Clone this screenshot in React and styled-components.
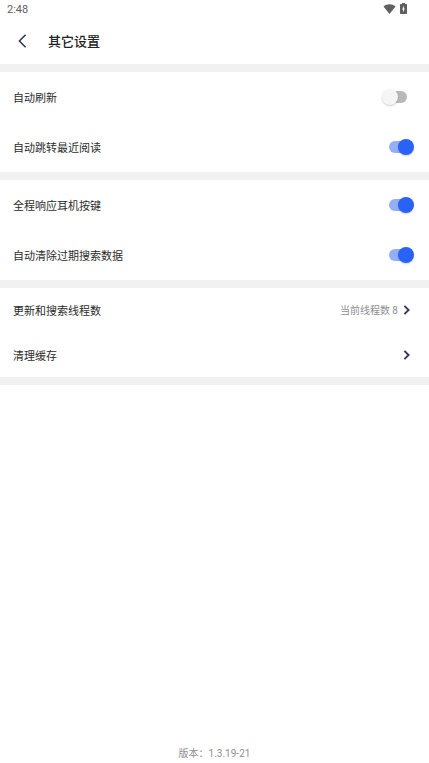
import { useState } from "react";
import styled, { createGlobalStyle } from "styled-components";

const GlobalStyle = createGlobalStyle`
    * {
        box-sizing: border-box;
    }
    body {
        margin: 0;
        background: #ffffff;
        color: #2c2c2c;
        font-family: Roboto, "Noto Sans CJK SC", sans-serif;
    }
`

const Page = styled.div`
    display: flex;
    flex-direction: column;
    min-height: 100vh;
`
const StatusBar = styled.div`
    display: flex;
    align-items: flex-start;
    justify-content: space-between;
    height: 18px;
    padding: 0 22px 0 7px;
    font-size: 11px;
    line-height: 20px;
    color: #606060;
`
const StatusIcons = styled.div`
    display: flex;
    align-items: center;
    gap: 4px;
    padding-top: 3px;
`
const Header = styled.header`
    display: flex;
    align-items: center;
    gap: 18px;
    height: 46px;
    padding: 0 16px;
`
const BackButton = styled.button`
    display: flex;
    padding: 0;
    border: 0;
    background: none;
    color: #353a5c;
    cursor: pointer;
`
const Title = styled.h1`
    margin: 0;
    padding-top: 2px;
    font-size: 13px;
    font-weight: 500;
    line-height: 20px;
    color: #222222;
`
const Section = styled.section`
    display: grid;
    gap: ${(props) => props.$gap || 0}px;
    border-top: 8px solid #f1f1f1;
`
const SwitchRow = styled.label`
    display: flex;
    align-items: center;
    justify-content: space-between;
    height: 50px;
    padding: 0 15px 0 13px;
    font-size: 11px;
    line-height: 16px;
    cursor: pointer;
`
const LinkRow = styled.button`
    display: flex;
    align-items: center;
    height: 44px;
    padding: 0 18px 0 13px;
    border: 0;
    background: none;
    color: inherit;
    font-family: inherit;
    font-size: 11px;
    line-height: 16px;
    text-align: left;
    cursor: pointer;

    svg {
        color: #353a5c;
    }
`
const RowTitle = styled.span`
    flex: 1;
    padding-top: 3px;
`
const RowValue = styled.span`
    margin-right: 5px;
    padding-top: 2px;
    font-size: 10px;
    color: #8e8e94;
`
const Switch = styled.input`
    appearance: none;
    display: flex;
    align-items: center;
    position: relative;
    width: 32px;
    height: 16px;
    margin: 0;
    cursor: pointer;

    &::before {
        content: "";
        width: 18px;
        height: 12px;
        margin: 0 auto;
        border-radius: 6px;
        background: #b9b9b9;
    }
    &::after {
        content: "";
        position: absolute;
        top: 0;
        left: 0;
        width: 16px;
        height: 16px;
        border-radius: 50%;
        background: #f5f5f5;
        box-shadow: 0 1px 2px rgba(0, 0, 0, 0.2);
    }
    &:checked::before {
        background: #94aff8;
    }
    &:checked::after {
        left: auto;
        right: 0;
        background: #2962f6;
    }
`
const Footer = styled.footer`
    flex: 1;
    display: flex;
    align-items: flex-end;
    justify-content: center;
    padding-bottom: 1px;
    border-top: 8px solid #f1f1f1;
    font-size: 10px;
    line-height: 16px;
    color: #8e8e94;
`

function WifiIcon(){
    return(
        <svg width="13" height="10" viewBox="0 0 13 10" fill="currentColor" aria-hidden="true">
            <path d="M6.5 10 L0.5 2.6 C2.2 1 4.3 0.2 6.5 0.2 S10.8 1 12.5 2.6 Z" />
        </svg>
    )
}

function BatteryIcon(){
    return(
        <svg width="7" height="11" viewBox="0 0 7 11" aria-hidden="true">
            <path fill="currentColor" d="M2 0 H5 V1 H6.4 Q7 1 7 1.7 V10.3 Q7 11 6.4 11 H0.6 Q0 11 0 10.3 V1.7 Q0 1 0.6 1 H2 Z" />
            <path fill="#ffffff" d="M3.9 2.6 L2.2 6.4 H3.1 V9.2 L4.8 5.4 H3.9 Z" />
        </svg>
    )
}

function BackIcon(){
    return(
        <svg width="14" height="14" viewBox="0 0 14 14" fill="none" stroke="currentColor" strokeWidth="1.6" aria-hidden="true">
            <path d="M9.6 0.8 L3.4 7 L9.6 13.2" />
        </svg>
    )
}

function ArrowIcon(){
    return(
        <svg width="8" height="10" viewBox="0 0 8 10" fill="none" stroke="currentColor" strokeWidth="1.9" aria-hidden="true">
            <path d="M1.4 0.8 L5.6 5 L1.4 9.2" />
        </svg>
    )
}

function SwitchItem(props){
    const [checked, setChecked] = useState(props.defaultOn)

    return(
        <SwitchRow>
            <RowTitle>{props.title}</RowTitle>
            <Switch type="checkbox" role="switch" checked={checked} onChange={(e)=>setChecked(e.target.checked)} />
        </SwitchRow>
    )
}

function LinkItem(props){
    return(
        <LinkRow type="button">
            <RowTitle>{props.title}</RowTitle>
            {props.value && <RowValue>{props.value}</RowValue>}
            <ArrowIcon/>
        </LinkRow>
    )
}

function App(){
    return(
        <Page lang="zh-CN">
            <GlobalStyle/>
            <StatusBar>
                <span>2:48</span>
                <StatusIcons>
                    <WifiIcon/>
                    <BatteryIcon/>
                </StatusIcons>
            </StatusBar>
            <Header>
                <BackButton type="button" aria-label="返回"><BackIcon/></BackButton>
                <Title>其它设置</Title>
            </Header>
            <Section>
                <SwitchItem title="自动刷新" defaultOn={false}/>
                <SwitchItem title="自动跳转最近阅读" defaultOn={true}/>
            </Section>
            <Section>
                <SwitchItem title="全程响应耳机按键" defaultOn={true}/>
                <SwitchItem title="自动清除过期搜索数据" defaultOn={true}/>
            </Section>
            <Section $gap={1}>
                <LinkItem title="更新和搜索线程数" value="当前线程数 8"/>
                <LinkItem title="清理缓存"/>
            </Section>
            <Footer>版本：1.3.19-21</Footer>
        </Page>
    )
}

export default App
